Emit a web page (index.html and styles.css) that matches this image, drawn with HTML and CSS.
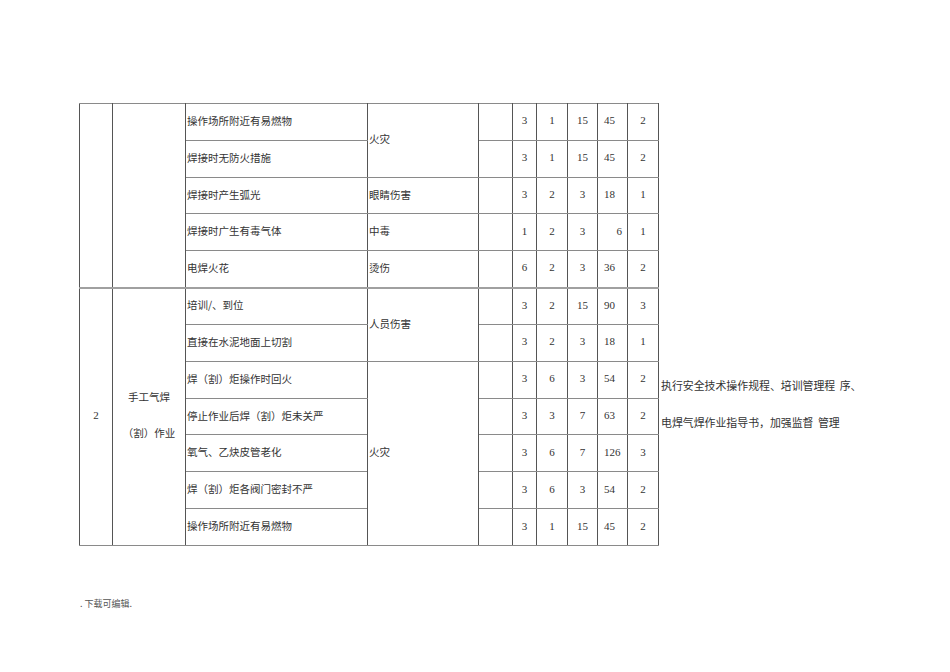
FILE: index.html
```html
<!DOCTYPE html>
<html lang="zh">
<head>
<meta charset="utf-8">
<link rel="stylesheet" href="styles.css">
</head>
<body>
<div class="page">
<table class="risk">
<colgroup>
<col style="width:33px"><col style="width:73px"><col style="width:182px"><col style="width:111px"><col style="width:34px"><col style="width:24px"><col style="width:31px"><col style="width:30px"><col style="width:30px"><col style="width:31px"><col style="width:230px">
</colgroup>
<tbody>
<tr>
<td rowspan="5" class="c"></td>
<td rowspan="5" class="c"></td>
<td class="t">操作场所附近有易燃物</td>
<td rowspan="2" class="t">火灾</td>
<td></td><td class="n">3</td><td class="n">1</td><td class="n">15</td><td class="l">45</td><td class="n">2</td>
<td rowspan="5" class="free"></td>
</tr>
<tr>
<td class="t">焊接时无防火措施</td>
<td></td><td class="n">3</td><td class="n">1</td><td class="n">15</td><td class="l">45</td><td class="n">2</td>
</tr>
<tr>
<td class="t">焊接时产生弧光</td>
<td class="t">眼睛伤害</td>
<td></td><td class="n">3</td><td class="n">2</td><td class="n">3</td><td class="l">18</td><td class="n">1</td>
</tr>
<tr>
<td class="t">焊接时广生有毒气体</td>
<td class="t">中毒</td>
<td></td><td class="n">1</td><td class="n">2</td><td class="n">3</td><td class="r">6</td><td class="n">1</td>
</tr>
<tr>
<td class="t">电焊火花</td>
<td class="t">烫伤</td>
<td></td><td class="n">6</td><td class="n">2</td><td class="n">3</td><td class="l">36</td><td class="n">2</td>
</tr>
<tr class="group">
<td rowspan="7" class="n">2</td>
<td rowspan="7" class="task">手工气焊<br>（割）作业</td>
<td class="t">培训/、到位</td>
<td rowspan="2" class="t">人员伤害</td>
<td></td><td class="n">3</td><td class="n">2</td><td class="n">15</td><td class="l">90</td><td class="n">3</td>
<td rowspan="7" class="free measure">执行安全技术操作规程、培训管理程 序、<br>电焊气焊作业指导书，加强监督 管理</td>
</tr>
<tr>
<td class="t">直接在水泥地面上切割</td>
<td></td><td class="n">3</td><td class="n">2</td><td class="n">3</td><td class="l">18</td><td class="n">1</td>
</tr>
<tr>
<td class="t">焊（割）炬操作时回火</td>
<td rowspan="5" class="t">火灾</td>
<td></td><td class="n">3</td><td class="n">6</td><td class="n">3</td><td class="l">54</td><td class="n">2</td>
</tr>
<tr>
<td class="t">停止作业后焊（割）炬未关严</td>
<td></td><td class="n">3</td><td class="n">3</td><td class="n">7</td><td class="l">63</td><td class="n">2</td>
</tr>
<tr>
<td class="t">氧气、乙炔皮管老化</td>
<td></td><td class="n">3</td><td class="n">6</td><td class="n">7</td><td class="l">126</td><td class="n">3</td>
</tr>
<tr>
<td class="t">焊（割）炬各阀门密封不严</td>
<td></td><td class="n">3</td><td class="n">6</td><td class="n">3</td><td class="l">54</td><td class="n">2</td>
</tr>
<tr>
<td class="t">操作场所附近有易燃物</td>
<td></td><td class="n">3</td><td class="n">1</td><td class="n">15</td><td class="l">45</td><td class="n">2</td>
</tr>
</tbody>
</table>
<p class="foot">. 下载可编辑.</p>
</div>
</body>
</html>
```

FILE: styles.css
```css
html, body {
  margin: 0;
  padding: 0;
  background: #ffffff;
}
body {
  font-family: "Liberation Serif", "Noto Sans CJK SC", serif;
  color: #333333;
}
.page {
  padding: 103px 0 0 79px;
}
.risk {
  border-collapse: collapse;
  table-layout: fixed;
  width: 809px;
  font-size: 10.5px;
}
.risk tr {
  height: 36.83px;
}
.risk td {
  border-left: 1px solid #555555;
  border-right: 1px solid #555555;
  border-top: 1px solid #8a8a8a;
  border-bottom: 1px solid #8a8a8a;
  padding: 0 0 3px 0;
  vertical-align: middle;
  white-space: nowrap;
  overflow: visible;
}
.risk tr.group td {
  border-top: 2px solid #a0a0a0;
}
.risk td.free,
.risk tr.group td.free {
  border: none;
}
.t {
  font-family: "Noto Sans CJK SC", sans-serif;
  text-align: left;
  padding-left: 1px !important;
  font-size: 10.5px;
}
.n {
  text-align: center;
  font-size: 11px;
}
.l {
  text-align: left;
  padding-left: 6px !important;
  font-size: 11px;
}
.r {
  text-align: right;
  padding-right: 5px !important;
  font-size: 11px;
}
.task {
  font-family: "Noto Sans CJK SC", sans-serif;
  text-align: center;
  line-height: 36px;
  font-size: 10.5px;
}
.measure {
  font-family: "Noto Sans CJK SC", sans-serif;
  text-align: left;
  vertical-align: top !important;
  padding: 79px 0 0 2px !important;
  line-height: 37px;
  font-size: 10.9px;
  word-spacing: 2px;
}
.foot {
  margin: 51px 0 0 1px;
  font-family: "Noto Sans CJK SC", sans-serif;
  font-size: 9px;
  color: #555555;
}
```
